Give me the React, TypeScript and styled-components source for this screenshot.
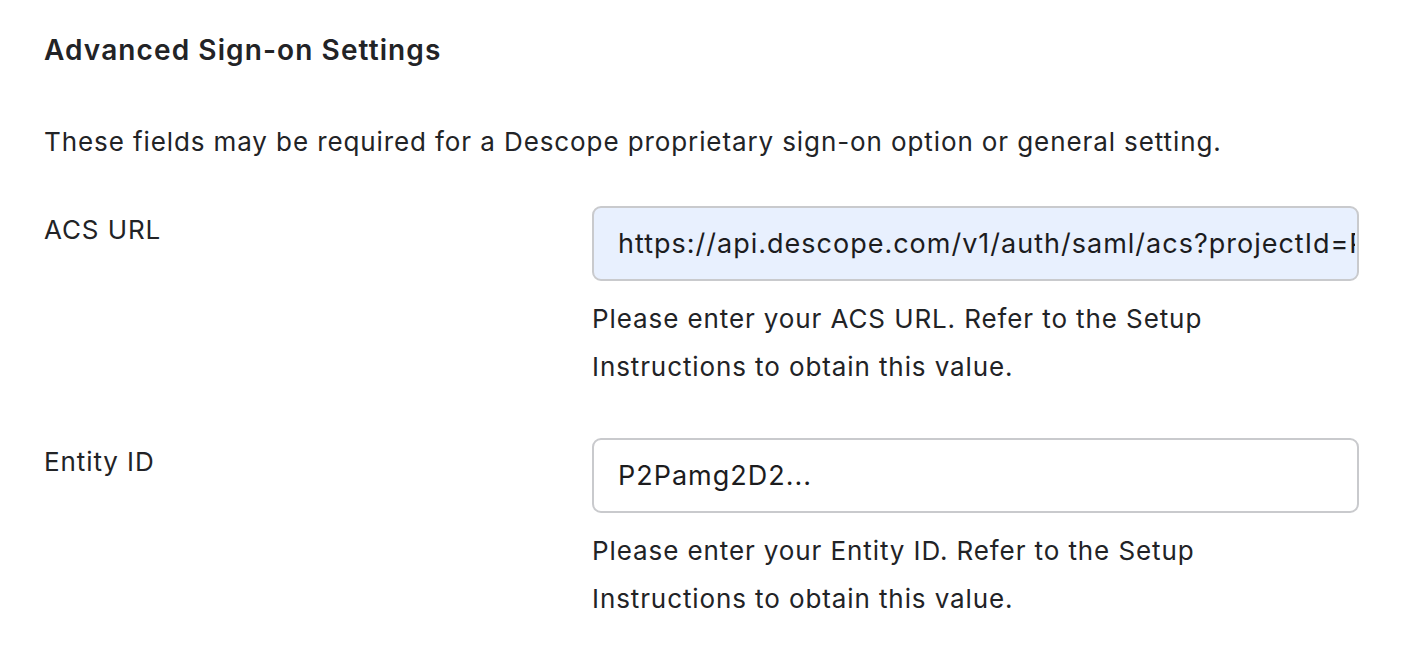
import React from 'react'
import styled, { createGlobalStyle } from 'styled-components'

const GlobalStyle = createGlobalStyle`
  body {
    margin: 0;
    background: #ffffff;
    font-family: Inter, 'Liberation Sans', sans-serif;
    color: #222326;
  }
`

const Page = styled.div`
  padding: 30px 44px 40px;
  width: 1314px;
`

const Title = styled.h2`
  margin: 0;
  font-size: 28px;
  line-height: 40px;
  font-weight: 600;
  letter-spacing: 1.1px;
`

const Intro = styled.p`
  margin: 52px 0 0;
  font-size: 26px;
  line-height: 40px;
  letter-spacing: 0.9px;
`

const Fields = styled.div`
  display: flex;
  flex-direction: column;
  gap: 47px;
  margin-top: 44px;
`

const FieldRow = styled.div`
  display: grid;
  grid-template-columns: 548px 767px;
`

const Label = styled.label`
  font-size: 26px;
  line-height: 48px;
  letter-spacing: 0.9px;
`

const Control = styled.div`
  display: flex;
  flex-direction: column;
  gap: 14px;
`

const Input = styled.input<{ $filled?: boolean }>`
  box-sizing: border-box;
  width: 100%;
  height: 75px;
  padding: 0 2px 0 24px;
  border: 2px solid #c9cacd;
  border-radius: 9px;
  background: ${p => (p.$filled ? '#e8f0fe' : '#ffffff')};
  font-family: Inter, 'Liberation Sans', sans-serif;
  font-size: 27px;
  letter-spacing: 1px;
  color: #1c1c1e;
  outline: none;
`

const Help = styled.div`
  font-size: 26px;
  line-height: 48px;
  letter-spacing: 0.9px;
  width: 660px;
`

const fields = [
  {
    label: 'ACS URL',
    value: 'https://api.descope.com/v1/auth/saml/acs?projectId=P2Pamg2D2',
    filled: true,
    help: 'Please enter your ACS URL. Refer to the Setup Instructions to obtain this value.',
  },
  {
    label: 'Entity ID',
    value: 'P2Pamg2D2...',
    filled: false,
    help: 'Please enter your Entity ID. Refer to the Setup Instructions to obtain this value.',
  },
]

export default function App() {
  return (
    <>
      <GlobalStyle />
      <Page>
        <Title>Advanced Sign-on Settings</Title>
        <Intro>These fields may be required for a Descope proprietary sign-on option or general setting.</Intro>
        <Fields>
          {fields.map(f => (
            <FieldRow key={f.label}>
              <Label>{f.label}</Label>
              <Control>
                <Input $filled={f.filled} defaultValue={f.value} readOnly />
                <Help>{f.help}</Help>
              </Control>
            </FieldRow>
          ))}
        </Fields>
      </Page>
    </>
  )
}
